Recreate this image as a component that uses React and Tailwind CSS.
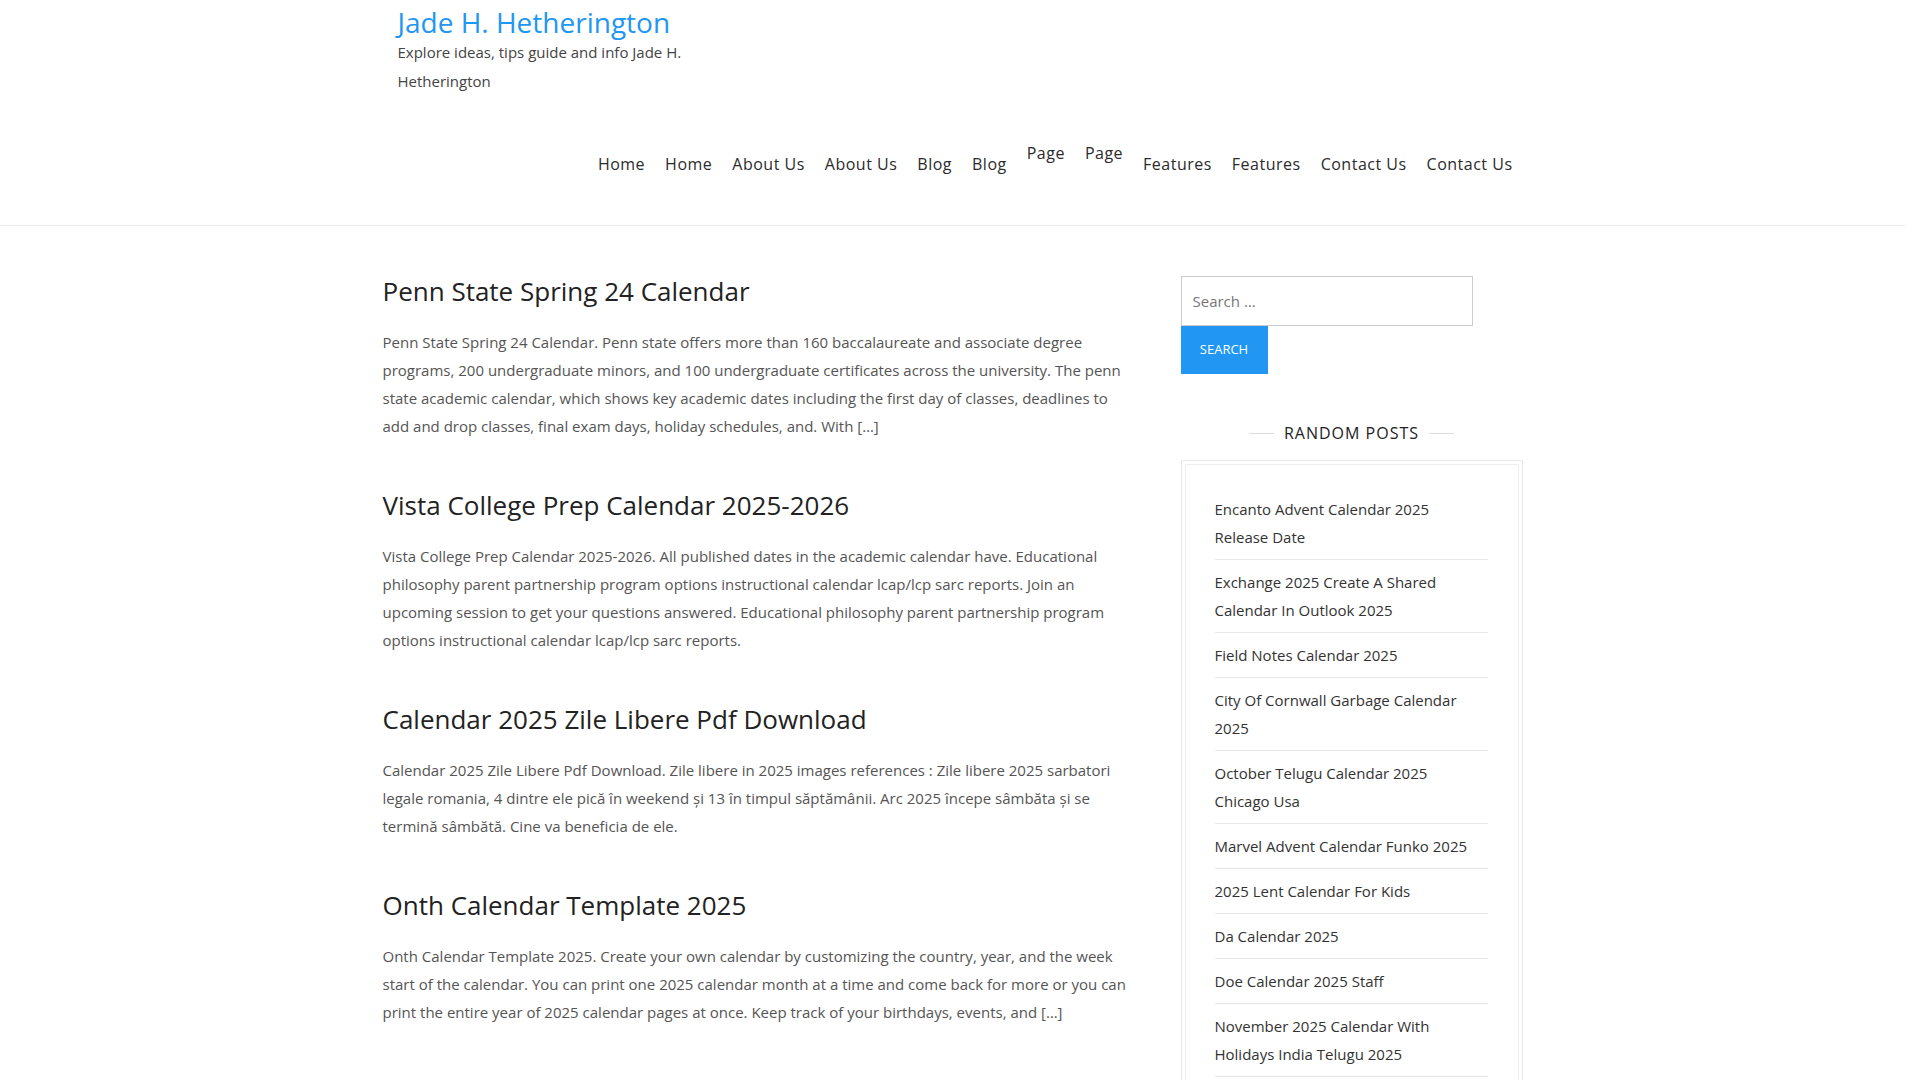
import React from 'react';

const navItems = [
  { label: 'Home' },
  { label: 'Home' },
  { label: 'About Us' },
  { label: 'About Us' },
  { label: 'Blog' },
  { label: 'Blog' },
  { label: 'Page', raised: true },
  { label: 'Page', raised: true },
  { label: 'Features' },
  { label: 'Features' },
  { label: 'Contact Us' },
  { label: 'Contact Us' },
];

const posts = [
  {
    title: 'Penn State Spring 24 Calendar',
    text: 'Penn State Spring 24 Calendar. Penn state offers more than 160 baccalaureate and associate degree programs, 200 undergraduate minors, and 100 undergraduate certificates across the university. The penn state academic calendar, which shows key academic dates including the first day of classes, deadlines to add and drop classes, final exam days, holiday schedules, and. With […]',
  },
  {
    title: 'Vista College Prep Calendar 2025-2026',
    text: 'Vista College Prep Calendar 2025-2026. All published dates in the academic calendar have. Educational philosophy parent partnership program options instructional calendar lcap/lcp sarc reports. Join an upcoming session to get your questions answered. Educational philosophy parent partnership program options instructional calendar lcap/lcp sarc reports.',
  },
  {
    title: 'Calendar 2025 Zile Libere Pdf Download',
    text: 'Calendar 2025 Zile Libere Pdf Download. Zile libere in 2025 images references : Zile libere 2025 sarbatori legale romania, 4 dintre ele pică în weekend și 13 în timpul săptămânii. Arc 2025 începe sâmbăta și se termină sâmbătă. Cine va beneficia de ele.',
  },
  {
    title: 'Onth Calendar Template 2025',
    text: 'Onth Calendar Template 2025. Create your own calendar by customizing the country, year, and the week start of the calendar. You can print one 2025 calendar month at a time and come back for more or you can print the entire year of 2025 calendar pages at once. Keep track of your birthdays, events, and […]',
  },
];

const randomPosts = [
  'Encanto Advent Calendar 2025 Release Date',
  'Exchange 2025 Create A Shared Calendar In Outlook 2025',
  'Field Notes Calendar 2025',
  'City Of Cornwall Garbage Calendar 2025',
  'October Telugu Calendar 2025 Chicago Usa',
  'Marvel Advent Calendar Funko 2025',
  '2025 Lent Calendar For Kids',
  'Da Calendar 2025',
  'Doe Calendar 2025 Staff',
  'November 2025 Calendar With Holidays India Telugu 2025',
];

function Header() {
  return (
    <header className="border-b border-[#ebebeb]">
      <div className="w-[1170px] mx-auto px-[15px] h-[225px] flex flex-col">
        {/* BRANDING */}
        <div className="w-[305px] pl-[15px] pt-[7px]">
          <p className="text-[28px] leading-[31px] font-medium text-[#2196f3] whitespace-nowrap">Jade H. Hetherington</p>
          <p className="text-[15px] leading-[29px] text-[#444]">Explore ideas, tips guide and info Jade H. Hetherington</p>
        </div>

        {/* MENU */}
        <nav className="self-end mt-[43px]">
          <ul className="flex items-end">
            {navItems.map((item, i) => (
              <li
                key={i}
                className={`px-[10px] text-[16px] leading-[28px] font-medium tracking-[0.5px] text-[#2b2b2b] whitespace-nowrap ${item.raised ? 'pb-[11px]' : ''}`}
              >
                {item.label}
              </li>
            ))}
          </ul>
        </nav>
      </div>
    </header>
  );
}

function Sidebar() {
  return (
    <aside className="w-[390px] pl-[33px] pr-[15px]">
      {/* SEARCH */}
      <form className="w-[292px]">
        <input
          type="text"
          placeholder="Search …"
          className="w-full h-[50px] border border-[#cccccc] px-[11px] text-[15px] text-[#444] placeholder:text-[#777] outline-none"
        />
        <button type="button" className="w-[87px] h-[48px] bg-[#2196f3] text-white text-[13px] font-medium uppercase">
          Search
        </button>
      </form>

      {/* RANDOM POSTS */}
      <div className="mt-[46px] flex items-center justify-center gap-[10px]">
        <span className="w-[25px] h-px bg-[#dddddd]"></span>
        <h3 className="text-[16px] leading-[26px] font-medium tracking-[1px] text-[#222]">RANDOM POSTS</h3>
        <span className="w-[25px] h-px bg-[#dddddd]"></span>
      </div>
      <div className="mt-[14px] border border-[#e8e8e8] p-[3px]">
        <ul className="border border-[#efefef] pl-[29px] pr-[30px] pt-[22px] pb-[20px]">
          {randomPosts.map((title, i) => (
            <li key={i} className="py-[8px] pr-[8px] border-b border-[#e6e6e6] text-[15px] leading-[28px] text-[#333]">
              {title}
            </li>
          ))}
        </ul>
      </div>
    </aside>
  );
}

export default function App() {
  return (
    <div className="w-[1905px] min-h-screen bg-white" style={{ fontFamily: '"Open Sans", "Noto Sans", sans-serif' }}>
      <Header />
      <div className="w-[1170px] mx-auto flex items-start pt-[50px] pb-[60px]">
        <main className="w-[780px] px-[15px]">
          {posts.map((post, i) => (
            <article key={i} className="mb-[50px]">
              <h2 className="text-[26px] leading-[31px] font-medium text-[#222] mb-[21px]">{post.title}</h2>
              <p className="text-[15px] leading-[28px] text-[#555]">{post.text}</p>
            </article>
          ))}
        </main>
        <Sidebar />
      </div>
    </div>
  );
}
